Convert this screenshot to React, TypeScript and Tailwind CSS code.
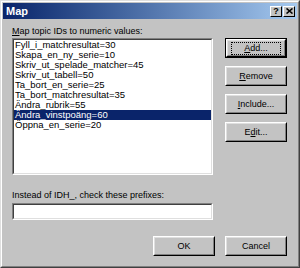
const items = [
  "Fyll_i_matchresultat=30",
  "Skapa_en_ny_serie=10",
  "Skriv_ut_spelade_matcher=45",
  "Skriv_ut_tabell=50",
  "Ta_bort_en_serie=25",
  "Ta_bort_matchresultat=35",
  "Ändra_rubrik=55",
  "Ändra_vinstpoäng=60",
  "Öppna_en_serie=20",
];

function Btn({ children, focus }: { children: React.ReactNode; focus?: boolean }) {
  return (
    <div className={`w-[62px] h-[20px] ${focus ? "border border-black" : ""}`}>
      <div className="w-full h-full border border-t-white border-l-white border-r-black border-b-black">
        <div className="w-full h-full border border-t-[#dfdfdf] border-l-[#dfdfdf] border-r-[#808080] border-b-[#808080] flex items-center justify-center">
          {focus ? (
            <div className="px-[12px] border border-dotted border-black leading-[11px]">{children}</div>
          ) : (
            <span className="leading-[11px]">{children}</span>
          )}
        </div>
      </div>
    </div>
  );
}

function Sunken({ className, children }: { className: string; children?: React.ReactNode }) {
  return (
    <div className={`${className} border border-t-[#808080] border-l-[#808080] border-r-white border-b-white`}>
      <div className="w-full h-full border border-t-[#404040] border-l-[#404040] border-r-[#dfdfdf] border-b-[#dfdfdf] bg-white">
        {children}
      </div>
    </div>
  );
}

function TitleButton({ children }: { children: React.ReactNode }) {
  return (
    <div className="w-[12px] h-[11px] bg-[#c3c3c3] border border-t-white border-l-white border-r-black border-b-black flex items-center justify-center">
      {children}
    </div>
  );
}

export default function App() {
  return (
    <div
      className="w-[300px] h-[268px] bg-[#c3c3c3] text-black text-[9px]"
      style={{ fontFamily: '"Liberation Sans", Arial, sans-serif' }}
    >
      <div className="w-full h-full border border-t-[#dfdfdf] border-l-[#dfdfdf] border-r-[#404040] border-b-[#404040]">
        <div className="w-full h-full border border-t-white border-l-white border-r-[#808080] border-b-[#808080] p-[1px]">
          {/* title bar */}
          <div className="h-[16px] flex items-center justify-between pl-[3px] pr-[2px] bg-gradient-to-r from-[#0a246a] to-[#a6caf0]">
            <span className="text-white font-bold text-[11px]">Map</span>
            <div className="flex gap-[1px]">
              <TitleButton>
                <span className="font-bold text-[9px] leading-none">?</span>
              </TitleButton>
              <TitleButton>
                <svg width="7" height="6" viewBox="0 0 7 6">
                  <path d="M0.5 0.5 L6.5 5.5 M6.5 0.5 L0.5 5.5" stroke="black" strokeWidth="1.6" />
                </svg>
              </TitleButton>
            </div>
          </div>

          <div className="pl-[9px] w-[284px]">
            <div className="mt-[6px] h-[12px] leading-[12px]">
              <span className="underline">M</span>ap topic IDs to numeric values:
            </div>
            <div className="flex mt-[1px]">
              <Sunken className="w-[201px] h-[137px]">
                <div className="text-[9.5px]">
                  {items.map((t, i) => (
                    <div
                      key={t}
                      className={`h-[10px] leading-[10px] pl-[1px] whitespace-nowrap ${
                        i === 7 ? "bg-[#0a246a] text-white" : ""
                      }`}
                    >
                      {t}
                    </div>
                  ))}
                </div>
              </Sunken>
              <div className="ml-[12px] flex flex-col gap-[8px]">
                <Btn focus>
                  <span className="underline">A</span>dd...
                </Btn>
                <Btn>
                  <span className="underline">R</span>emove
                </Btn>
                <Btn>
                  <span className="underline">I</span>nclude...
                </Btn>
                <Btn>
                  E<span className="underline">d</span>it...
                </Btn>
              </div>
            </div>
            <div className="mt-[14px] h-[12px] leading-[12px]">Instead of IDH_, check these prefixes:</div>
            <Sunken className="w-[201px] h-[17px] mt-[2px]" />
            <div className="flex justify-end gap-[10px] mt-[16px] w-[275px]">
              <Btn>OK</Btn>
              <Btn>Cancel</Btn>
            </div>
          </div>
        </div>
      </div>
    </div>
  );
}
